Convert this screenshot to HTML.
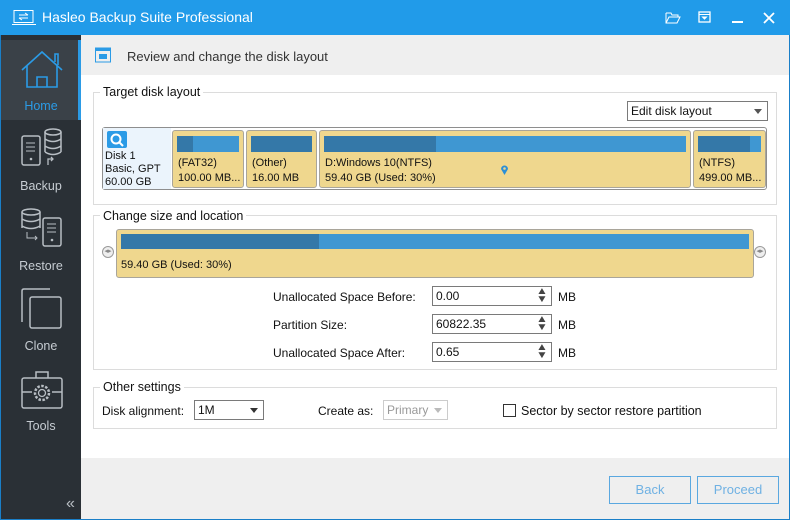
<!DOCTYPE html>
<html><head><style>
*{margin:0;padding:0;box-sizing:border-box}
body{width:790px;height:520px;position:relative;overflow:hidden;font-family:"Liberation Sans",sans-serif;font-size:12px;color:#111;background:#fff}
.a{position:absolute}
.tb{left:0;top:0;width:790px;height:35px;background:#219be9;color:#fff;font-size:14px}
.side{left:0;top:35px;width:81px;height:485px;background:#2a3036;border-left:1px solid #1a7fc8}
.nav{position:absolute;left:0;width:80px;text-align:center;color:#c6ccd2;font-size:12.5px}
.grp{border:1px solid #dcdcdc}
.lg{background:#fff;padding:0 3px;font-size:12.5px}
.part{background:#efd78e;border:1px solid #a9a59a;border-radius:3px;font-size:11px;line-height:15px}
.bar{position:absolute;left:4px;right:4px;top:5px;height:16px;background:#3f97d2}
.bar i{display:block;height:100%;background:#3478a8}
.pt{position:absolute;left:5px;top:25px;white-space:nowrap}
.inp{border:1px solid #7a7a7a;background:#fff;height:20px;padding:2px 3px;font-size:12px}
.btn{border:1px solid #5aa8e0;color:#6fb1e3;font-size:13px;text-align:center;line-height:26px;background:#efefef}
.sp{font-size:10px;line-height:8px;color:#444;transform:scaleX(1.2)}
</style></head><body>
<div class="a tb">
<svg class="a" style="left:12px;top:10px" width="24" height="15" viewBox="0 0 24 15"><rect x="2" y="0.5" width="19" height="12" fill="none" stroke="#fff"/><path d="M0 14.5H24" stroke="#fff"/><path d="M7 5h9M13 3l3 2M7 8h9M7 8l3 2" stroke="#fff" fill="none"/></svg>
<div class="a" style="left:42px;top:9px">Hasleo Backup Suite Professional</div>
<svg class="a" style="left:665px;top:11px" width="16" height="13"><path d="M1 2h5l1 2h6v2M1 2v10h11l3-6H4L1 12" fill="none" stroke="#fff"/></svg>
<svg class="a" style="left:698px;top:11px" width="14" height="13"><rect x="1" y="1" width="11" height="10" fill="none" stroke="#fff" stroke-width="1.3"/><path d="M1 3.5h11M4.5 6h4l-2 2z" stroke="#fff" fill="#fff"/></svg>
<div class="a" style="left:732px;top:21px;width:11px;height:2px;background:#fff"></div>
<svg class="a" style="left:763px;top:12px" width="12" height="12"><path d="M1 1l10 10M11 1L1 11" stroke="#fff" stroke-width="1.8"/></svg>
</div>
<div class="a side">
<div class="a" style="left:0;top:5px;width:80px;height:80px;background:#3a4148"></div>
<div class="a" style="left:77px;top:5px;width:3px;height:80px;background:#2b9be6"></div>
<svg class="a" style="left:19px;top:13px" width="44" height="42"><path d="M2 22L22 4l20 18M7 18v21h30V18M17 39V29h10v10M35 14V6h3v11" fill="none" stroke="#2b9be6" stroke-width="1.6"/></svg>
<div class="nav" style="top:64px;color:#2b9be6">Home</div>
<svg class="a" style="left:20px;top:93px" width="42" height="40"><rect x="1" y="8" width="18" height="29" rx="2" fill="none" stroke="#b8bec4" stroke-width="1.5"/><path d="M5 15h9M5 19h9M5 23h9" stroke="#b8bec4"/><circle cx="10" cy="31" r="1.3" fill="#b8bec4"/><ellipse cx="32" cy="4" rx="8" ry="3" fill="none" stroke="#b8bec4" stroke-width="1.5"/><path d="M24 4v20M40 4v20M24 11q8 5 16 0M24 18q8 5 16 0M24 24q8 5 16 0" fill="none" stroke="#b8bec4" stroke-width="1.5"/><path d="M27 37v-6h5M30 29l2 2-2 2" fill="none" stroke="#b8bec4" stroke-width="1.3"/></svg>
<div class="nav" style="top:144px">Backup</div>
<svg class="a" style="left:20px;top:173px" width="42" height="40"><ellipse cx="10" cy="4" rx="9" ry="3" fill="none" stroke="#b8bec4" stroke-width="1.5"/><path d="M1 4v16M19 4v16M1 11q9 5 18 0M1 18q9 5 18 0" fill="none" stroke="#b8bec4" stroke-width="1.5"/><rect x="22" y="10" width="18" height="28" rx="2" fill="none" stroke="#b8bec4" stroke-width="1.5"/><path d="M26 16h9M26 20h9M26 24h9M6 24v6h10M14 28l2 2-2 2" stroke="#b8bec4" fill="none"/><circle cx="31" cy="32" r="1.3" fill="#b8bec4"/></svg>
<div class="nav" style="top:224px">Restore</div>
<svg class="a" style="left:20px;top:253px" width="42" height="42"><path d="M1 34V3q0-2 2-2h26" fill="none" stroke="#b8bec4" stroke-width="1.5"/><rect x="9" y="9" width="31" height="31" rx="2" fill="none" stroke="#b8bec4" stroke-width="1.5"/></svg>
<div class="nav" style="top:304px">Clone</div>
<svg class="a" style="left:20px;top:335px" width="42" height="40"><rect x="1" y="8" width="40" height="30" rx="2" fill="none" stroke="#b8bec4" stroke-width="1.5"/><path d="M15 8V2h12v6M1 22h10M31 22h10" fill="none" stroke="#b8bec4" stroke-width="1.5"/><circle cx="21" cy="23" r="7" fill="none" stroke="#b8bec4" stroke-width="2.5" stroke-dasharray="2.5 1.5"/><circle cx="21" cy="23" r="3.5" fill="none" stroke="#b8bec4" stroke-width="1.3"/></svg>
<div class="nav" style="top:384px">Tools</div>
<div class="a" style="left:65px;top:460px;color:#b8bec4;font-size:16px">«</div>
</div>
<div class="a" style="left:81px;top:35px;width:709px;height:40px;background:#efefef"></div>
<svg class="a" style="left:95px;top:47px" width="16" height="16"><rect x="0.5" y="1" width="15" height="14" fill="none" stroke="#2b9be6"/><rect x="0.5" y="1" width="15" height="3" fill="#2b9be6"/><rect x="4" y="7" width="8" height="5" fill="#2b9be6"/></svg>
<div class="a" style="left:127px;top:49px;font-size:13px;color:#333">Review and change the disk layout</div>
<div class="a" style="left:81px;top:458px;width:709px;height:62px;background:#efefef"></div>
<div class="a" style="left:789px;top:35px;width:1px;height:485px;background:#1a7fc8"></div>
<div class="a" style="left:0;top:519px;width:790px;height:1px;background:#1a7fc8"></div>

<div class="a grp" style="left:93px;top:92px;width:684px;height:113px"></div>
<div class="a lg" style="left:100px;top:85px">Target disk layout</div>
<div class="a inp" style="left:627px;top:101px;width:141px;height:20px;font-size:12px">Edit disk layout<span class="a" style="right:5px;top:7px;border:4px solid transparent;border-top:5px solid #555"></span></div>
<div class="a" style="left:102px;top:127px;width:665px;height:63px;border:1px solid #8e8e8e;border-radius:3px;background:#fff"></div>
<div class="a" style="left:103px;top:128px;width:68px;height:61px;background:#ebf4fc"></div>
<svg class="a" style="left:106px;top:130px" width="22" height="19"><rect x="1" y="1" width="20" height="17" rx="2" fill="#2b9be6"/><circle cx="10" cy="9" r="4.5" fill="none" stroke="#fff" stroke-width="2"/><path d="M13 12l4 4" stroke="#fff" stroke-width="2"/></svg>
<div class="a" style="left:105px;top:150px;font-size:11px;line-height:13px">Disk 1<br>Basic, GPT<br>60.00 GB</div>
<div class="a part" style="left:172px;top:130px;width:72px;height:58px"><div class="bar"><i style="width:26%"></i></div><div class="pt">(FAT32)<br>100.00 MB...</div></div>
<div class="a part" style="left:246px;top:130px;width:71px;height:58px"><div class="bar"><i style="width:100%"></i></div><div class="pt">(Other)<br>16.00 MB</div></div>
<div class="a part" style="left:319px;top:130px;width:372px;height:58px"><div class="bar"><i style="width:31%"></i></div><div class="pt">D:Windows 10(NTFS)<br>59.40 GB (Used: 30%)</div>
<svg class="a" style="left:180px;top:33px" width="9" height="12"><path d="M4.5 11L1 5a3.5 3.5 0 1 1 7 0z" fill="#2b8fd6"/><circle cx="4.5" cy="4.5" r="1.3" fill="#efd78e"/></svg></div>
<div class="a part" style="left:693px;top:130px;width:73px;height:58px"><div class="bar"><i style="width:82%"></i></div><div class="pt">(NTFS)<br>499.00 MB...</div></div>

<div class="a grp" style="left:93px;top:215px;width:684px;height:155px"></div>
<div class="a lg" style="left:100px;top:209px">Change size and location</div>
<div class="a part" style="left:116px;top:229px;width:638px;height:49px"><div class="bar" style="top:4px;height:15px"><i style="width:31.5%"></i></div><div class="pt" style="left:4px;top:28px">59.40 GB (Used: 30%)</div></div>
<div class="a" style="left:102px;top:246px;width:12px;height:12px;border:1px solid #999;border-radius:50%;background:#eee;font-size:7px;line-height:10px;text-align:center;color:#888">◂▸</div>
<div class="a" style="left:754px;top:246px;width:12px;height:12px;border:1px solid #999;border-radius:50%;background:#eee;font-size:7px;line-height:10px;text-align:center;color:#888">◂▸</div>
<div class="a" style="left:273px;top:290px">Unallocated Space Before:</div>
<div class="a" style="left:273px;top:318px">Partition Size:</div>
<div class="a" style="left:273px;top:346px">Unallocated Space After:</div>
<div class="a inp" style="left:432px;top:286px;width:120px">0.00</div>
<div class="a inp" style="left:432px;top:314px;width:120px">60822.35</div>
<div class="a inp" style="left:432px;top:342px;width:120px">0.65</div>
<div class="a sp" style="left:537px;top:288px">▲<br>▼</div>
<div class="a sp" style="left:537px;top:316px">▲<br>▼</div>
<div class="a sp" style="left:537px;top:344px">▲<br>▼</div>
<div class="a" style="left:558px;top:290px">MB</div>
<div class="a" style="left:558px;top:318px">MB</div>
<div class="a" style="left:558px;top:346px">MB</div>

<div class="a grp" style="left:93px;top:387px;width:684px;height:42px"></div>
<div class="a lg" style="left:100px;top:380px">Other settings</div>
<div class="a" style="left:102px;top:404px">Disk alignment:</div>
<div class="a inp" style="left:194px;top:400px;width:70px">1M<span class="a" style="right:5px;top:7px;border:4px solid transparent;border-top:5px solid #333"></span></div>
<div class="a" style="left:318px;top:404px">Create as:</div>
<div class="a inp" style="left:383px;top:400px;width:65px;border-color:#ccc;color:#999">Primary<span class="a" style="right:5px;top:7px;border:4px solid transparent;border-top:5px solid #bbb"></span></div>
<div class="a" style="left:503px;top:404px;width:13px;height:13px;border:1px solid #333"></div>
<div class="a" style="left:521px;top:404px;font-size:12.5px">Sector by sector restore partition</div>

<div class="a btn" style="left:609px;top:476px;width:82px;height:28px">Back</div>
<div class="a btn" style="left:697px;top:476px;width:82px;height:28px">Proceed</div>
</body></html>
